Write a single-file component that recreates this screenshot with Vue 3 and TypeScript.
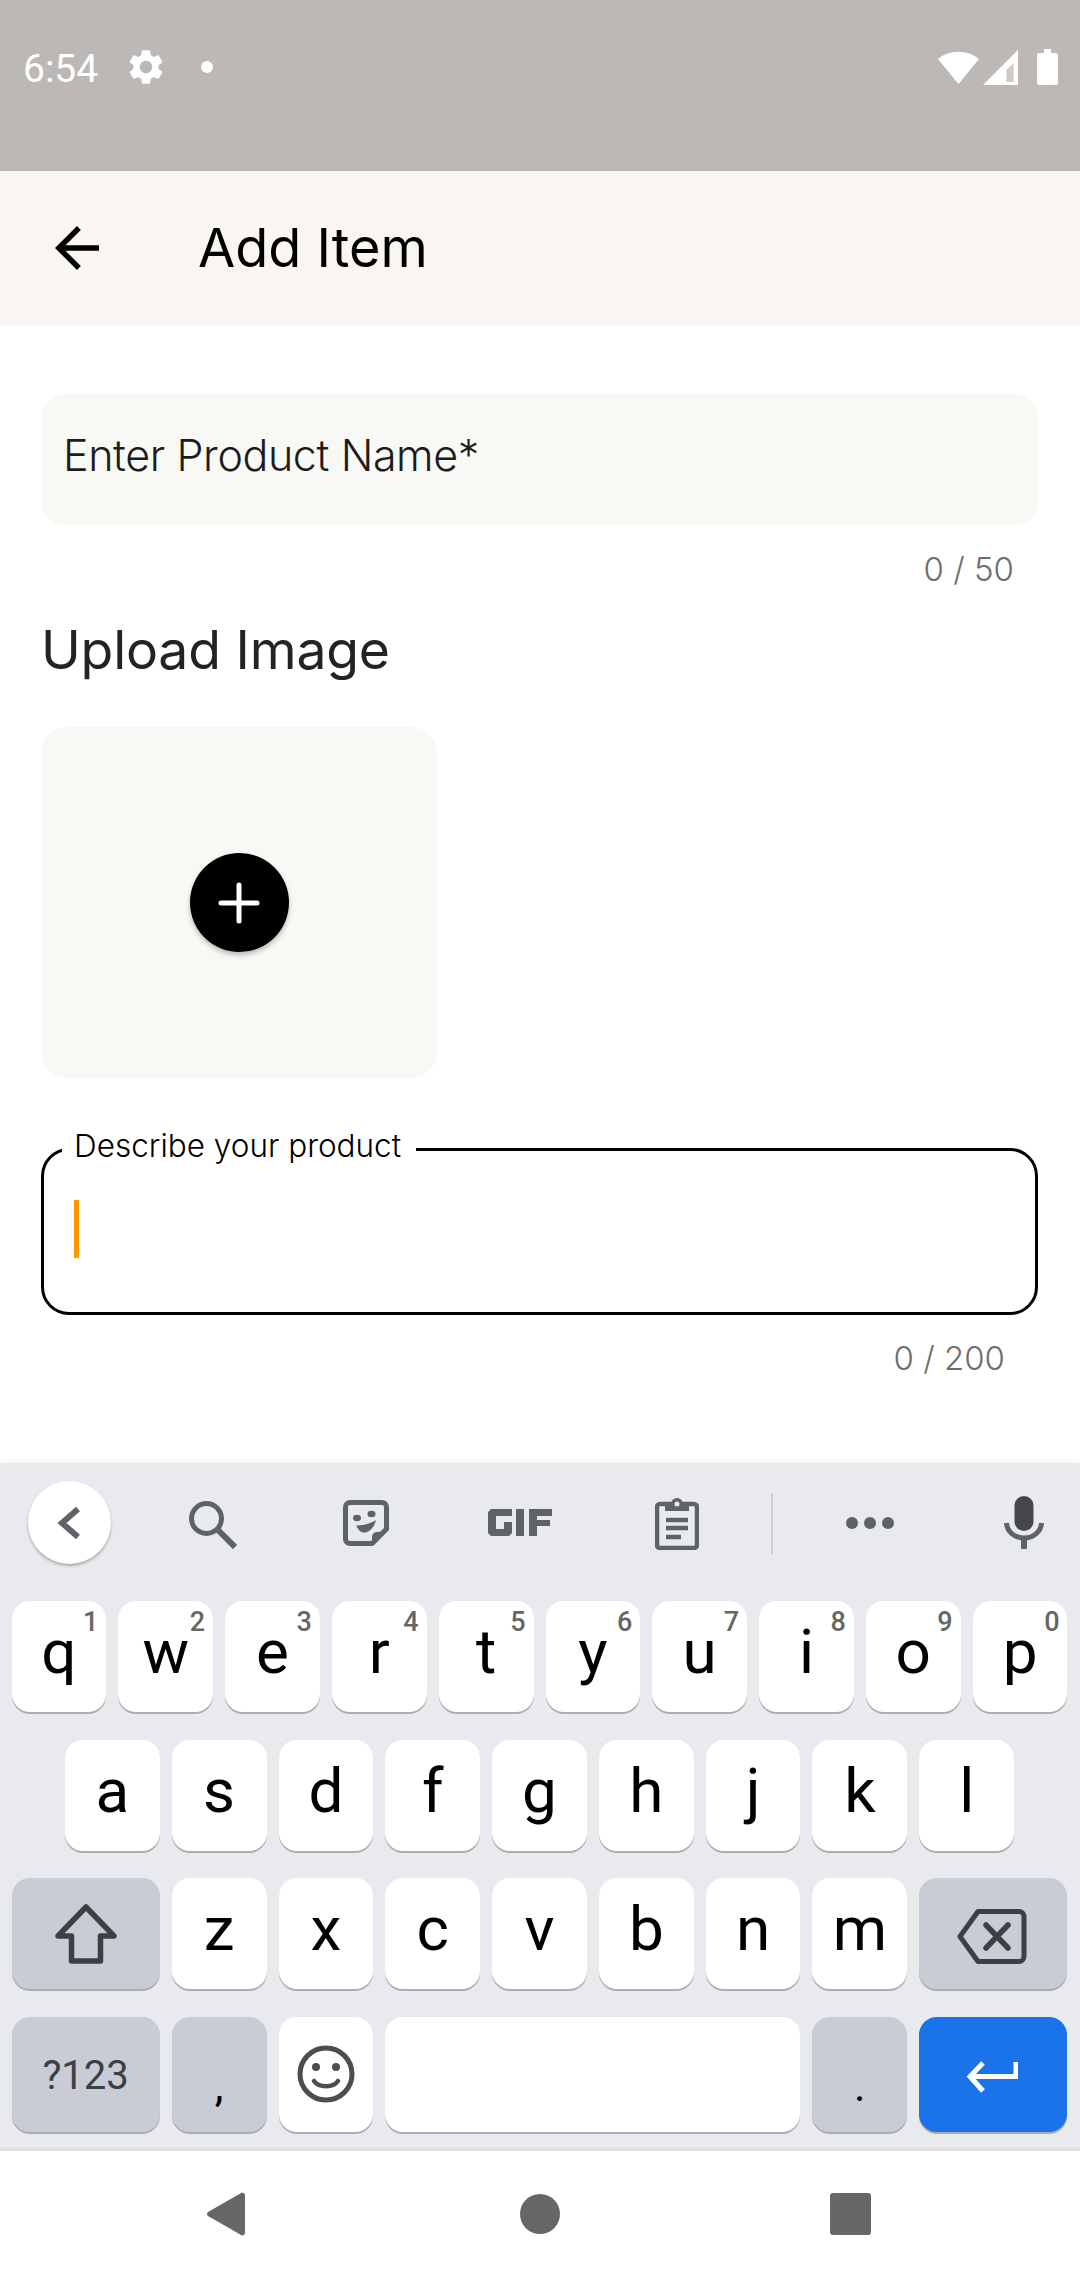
<script setup lang="ts">
interface KeyDef { label: string; hint?: string; cls?: string }
const row1: KeyDef[] = ['q','w','e','r','t','y','u','i','o','p'].map((label, i) => ({ label, hint: String((i + 1) % 10) }))
const row2: KeyDef[] = ['a','s','d','f','g','h','j','k','l'].map((label) => ({ label }))
const row3: KeyDef[] = ['z','x','c','v','b','n','m'].map((label) => ({ label }))
</script>

<template>
  <div class="screen">
    <header class="status">
      <div class="status-left">
        <span class="time">6:54</span>
        <svg class="gear" viewBox="0 0 24 24"><path fill="#fff" d="M19.14 12.94c.04-.3.06-.61.06-.94 0-.32-.02-.64-.07-.94l2.03-1.58c.18-.14.23-.41.12-.61l-1.92-3.32c-.12-.22-.37-.29-.59-.22l-2.39.96c-.5-.38-1.03-.7-1.62-.94l-.36-2.54c-.04-.24-.24-.41-.48-.41h-3.84c-.24 0-.43.17-.47.41l-.36 2.54c-.59.24-1.13.57-1.62.94l-2.39-.96c-.22-.08-.47 0-.59.22L2.74 8.87c-.12.21-.08.47.12.61l2.03 1.58c-.05.3-.09.63-.09.94s.02.64.07.94l-2.03 1.58c-.18.14-.23.41-.12.61l1.92 3.32c.12.22.37.29.59.22l2.39-.96c.5.38 1.03.7 1.62.94l.36 2.54c.05.24.24.41.48.41h3.84c.24 0 .44-.17.47-.41l.36-2.54c.59-.24 1.13-.56 1.62-.94l2.39.96c.22.08.47 0 .59-.22l1.92-3.32c.12-.22.07-.47-.12-.61l-2.01-1.58zM12 15.6c-1.98 0-3.6-1.62-3.6-3.6s1.62-3.6 3.6-3.6 3.6 1.62 3.6 3.6-1.62 3.6-3.6 3.6z"/></svg>
        <span class="dot"></span>
      </div>
      <div class="status-right">
        <svg class="wifi" width="41" height="34" viewBox="0 0 41 34"><path fill="#fff" d="M0 9A33 33 0 0 1 41 9L20.500 34Z"/></svg>
        <svg class="signal" width="35" height="35" viewBox="0 0 35 35"><path fill="#fff" fill-opacity=".25" d="M23.500 20 30.500 13V32H23.500Z"/><path fill="#fff" fill-rule="evenodd" d="M35 0V35H0ZM23.500 20V32H30.500V13Z"/></svg>
        <svg class="battery" width="21" height="36" viewBox="0 0 21 36"><path fill="#fff" d="M7 0H14V4H18.500A2.500 2.500 0 0 1 21 6.500V33.500A2.500 2.500 0 0 1 18.500 36H2.500A2.500 2.500 0 0 1 0 33.500V6.500A2.500 2.500 0 0 1 2.500 4H7Z"/></svg>
      </div>
    </header>

    <div class="appbar">
      <svg class="back" viewBox="0 0 24 24"><path fill="#000" d="M20 11H7.830l5.590-5.590L12 4l-8 8 8 8 1.410-1.410L7.830 13H20v-2z"/></svg>
      <h1 class="title">Add Item</h1>
    </div>

    <main class="form">
      <div class="name-field">Enter Product Name*</div>
      <div class="counter counter-name">0 / 50</div>
      <h2 class="upload-title">Upload Image</h2>
      <div class="upload-box">
        <button class="fab" type="button">
          <svg width="44" height="44" viewBox="0 0 44 44"><path d="M22 4V40M4 22H40" stroke="#fff" stroke-width="5" stroke-linecap="round" fill="none"/></svg>
        </button>
      </div>
      <div class="describe">
        <span class="describe-label">Describe your product</span>
        <span class="caret"></span>
      </div>
      <div class="counter counter-desc">0 / 200</div>
    </main>

    <section class="keyboard">
      <div class="toolbar">
        <span class="collapse">
          <svg width="30" height="34" viewBox="0 0 30 34"><path d="M23 3 7 17 23 31" fill="none" stroke="#5f6368" stroke-width="6"/></svg>
        </span>
        <svg class="tool tool-search" width="48" height="48" viewBox="0 0 48 48"><circle cx="17.500" cy="17.500" r="15" fill="none" stroke="#5f6368" stroke-width="5"/><path d="M28 28 46 46" stroke="#5f6368" stroke-width="6" fill="none"/></svg>
        <svg class="tool tool-sticker" width="46" height="46" viewBox="0 0 46 46">
          <path d="M7 2.500H39A4.500 4.500 0 0 1 43.500 7V29L29 43.500H7A4.500 4.500 0 0 1 2.500 39V7A4.500 4.500 0 0 1 7 2.500Z" fill="none" stroke="#5f6368" stroke-width="5"/>
          <path d="M44 31 31 45H29V37A5 5 0 0 1 34 32Z" fill="#5f6368"/>
          <ellipse cx="14" cy="18" rx="4" ry="3.200" fill="#5f6368"/><ellipse cx="28.500" cy="14" rx="4" ry="3.200" fill="#5f6368"/>
          <path d="M13 25.500C20 25.500 28 23.500 33 20C31 28 26 33 20 32.500C17 32 15 29 13 25.500Z" fill="#5f6368"/>
        </svg>
        <svg class="tool tool-gif" width="64" height="27" viewBox="0 0 64 27">
          <path d="M3 0H24V7H8V20H16V13H24V24L21 27H3L0 24V3Z" fill="#5f6368"/>
          <rect x="28" y="0" width="8" height="27" fill="#5f6368"/>
          <path d="M41 0H64V7H49V11H62V17H49V27H41Z" fill="#5f6368"/>
        </svg>
        <svg class="tool tool-clip" width="44" height="53" viewBox="0 0 44 53">
          <rect x="2" y="7" width="40" height="44" rx="3" fill="none" stroke="#5f6368" stroke-width="4.500"/>
          <path d="M10 7H16A6 6 0 0 1 28 7H34V14H10Z" fill="#5f6368"/>
          <circle cx="22" cy="7" r="2.500" fill="#e8eaed"/>
          <path d="M11 23H33M11 31H33M11 40H26" stroke="#5f6368" stroke-width="4.500" fill="none"/>
        </svg>
        <span class="tool-divider"></span>
        <svg class="tool tool-dots" width="48" height="12" viewBox="0 0 48 12"><circle cx="6" cy="6" r="6" fill="#5f6368"/><circle cx="24" cy="6" r="6" fill="#5f6368"/><circle cx="42" cy="6" r="6" fill="#5f6368"/></svg>
        <svg class="tool tool-mic" width="40" height="53" viewBox="0 0 40 53">
          <rect x="10.500" y="0" width="19" height="35" rx="9.500" fill="#46474a"/>
          <path d="M2.500 27C3 36 11 42 20 42S37 36 37.500 27" fill="none" stroke="#5f6368" stroke-width="5"/>
          <rect x="17" y="41" width="6" height="12" fill="#5f6368"/>
        </svg>
      </div>

      <div class="rows">
        <div class="row">
          <div v-for="k in row1" :key="k.label" class="key">
            <span class="hint">{{ k.hint }}</span>{{ k.label }}
          </div>
        </div>
        <div class="row">
          <div v-for="k in row2" :key="k.label" class="key">{{ k.label }}</div>
        </div>
        <div class="row">
          <div class="key fn wide">
            <svg width="62" height="60" viewBox="0 0 62 60"><path d="M31 3 59 32 H45.500 V57 H16.500 V32 H3 Z" fill="none" stroke="#3c4043" stroke-width="5.500" stroke-linejoin="round"/></svg>
          </div>
          <div v-for="k in row3" :key="k.label" class="key">{{ k.label }}</div>
          <div class="key fn wide icon-backspace">
            <svg width="70" height="55" viewBox="0 0 70 55"><path d="M21 2.500H62A5 5 0 0 1 67 7.500V47.500A5 5 0 0 1 62 52.500H21L3 27.500Z" fill="none" stroke="#3c4043" stroke-width="5" stroke-linejoin="round"/><path d="M29 16 51 39M51 16 29 39" stroke="#3c4043" stroke-width="5.500" stroke-linecap="round"/></svg>
          </div>
        </div>
        <div class="row row-bottom">
          <div class="key fn wide sym">?123</div>
          <div class="key fn punct">,</div>
          <div class="key no-pad">
            <svg width="58" height="58" viewBox="0 0 58 58"><circle cx="29" cy="29" r="26" fill="none" stroke="#4d4d4f" stroke-width="5"/><circle cx="19" cy="22" r="4" fill="#4d4d4f"/><circle cx="39" cy="22" r="4" fill="#4d4d4f"/><path d="M17 36C22 43 36 43 41 36" fill="none" stroke="#4d4d4f" stroke-width="4.500" stroke-linecap="round"/></svg>
          </div>
          <div class="key space"></div>
          <div class="key fn punct">.</div>
          <div class="key wide enter">
            <svg width="52" height="32" viewBox="0 0 52 32"><path d="M50 1V15.500H4M17 2 4 15.500 17 30" fill="none" stroke="#fff" stroke-width="5"/></svg>
          </div>
        </div>
      </div>
    </section>

    <nav class="navbar">
      <svg width="40" height="46" viewBox="0 0 40 46"><path d="M36 1.500A3 3 0 0 1 39 4V42A3 3 0 0 1 36 44.500L2 25A2.500 2.500 0 0 1 2 21Z" fill="#676767"/></svg>
      <span class="home"></span>
      <span class="recent"></span>
    </nav>
  </div>
</template>

<style>
html, body { margin: 0; padding: 0; background: #fff; }
</style>

<style scoped>
.screen {
  width: 1080px;
  height: 2280px;
  display: flex;
  flex-direction: column;
  background: #fff;
  overflow: hidden;
  font-family: "Inter", "Liberation Sans", sans-serif;
}
.status {
  height: 171px;
  flex: none;
  box-sizing: border-box;
  background: #bcb8b5;
  display: flex;
  justify-content: space-between;
  align-items: flex-start;
  padding: 49px 22px 0 23px;
}
.status-left { display: flex; align-items: center; height: 36px; }
.time {
  font-family: Roboto, sans-serif;
  font-size: 39px;
  color: #fff;
  line-height: 36px;
  width: 74px;
  margin-top: 3px;
}
.gear { width: 42px; height: 42px; margin-left: 28px; flex: none; }
.dot { width: 12px; height: 12px; border-radius: 50%; background: #fff; margin-left: 34px; }
.status-right { display: flex; align-items: flex-start; }
.wifi { margin-top: 1px; }
.signal { margin-left: 4px; margin-top: 1px; }
.battery { margin-left: 19px; }

.appbar {
  height: 154px;
  flex: none;
  background: #f9f6f1;
  display: flex;
  align-items: center;
  padding-left: 44px;
}
.back { width: 66px; height: 66px; flex: none; }
.title {
  margin: 0 0 0 88px;
  font-size: 54px;
  font-weight: 400;
  color: #000;
  line-height: 1;
}

.form {
  flex: 1;
  min-height: 0;
  display: flex;
  flex-direction: column;
  padding: 69px 42px 0 41px;
}
.form > * { flex: none; }
.name-field {
  height: 131px;
  box-sizing: border-box;
  background: #f8f9f4;
  border-radius: 24px;
  padding: 34px 22px 0;
  font-size: 43px;
  font-weight: 350;
  letter-spacing: -.4px;
  line-height: 54px;
  color: #1c1c1c;
}
.counter { font-size: 33px; font-weight: 300; line-height: 40px; color: #6e6e6e; text-align: right; }
.counter-name { margin-top: 24px; padding-right: 24px; }
.upload-title {
  margin: 30px 0 0;
  font-size: 53.5px;
  font-weight: 400;
  letter-spacing: -.2px;
  line-height: 62px;
  color: #232323;
}
.upload-box {
  width: 396px;
  height: 351px;
  margin-top: 46px;
  background: #f8f9f4;
  border-radius: 26px;
  display: flex;
  align-items: center;
  justify-content: center;
}
.fab {
  width: 99px;
  height: 99px;
  padding: 0;
  border: none;
  border-radius: 50%;
  background: #000;
  box-shadow: 0 3px 5px rgba(0, 0, 0, .25);
  display: flex;
  align-items: center;
  justify-content: center;
}
.describe {
  position: relative;
  height: 167px;
  box-sizing: border-box;
  margin-top: 70px;
  border: 3px solid #000;
  border-radius: 28px;
  padding: 49px 0 0 30px;
}
.describe-label {
  position: absolute;
  left: 18px;
  top: -27px;
  padding: 0 15px 0 12px;
  background: #fff;
  font-size: 31.5px;
  font-weight: 350;
  line-height: 44px;
  color: #000;
}
.caret { display: block; width: 5px; height: 58px; background: #ff9800; }
.counter-desc { margin-top: 23px; padding-right: 33px; }

.keyboard {
  height: 688px;
  flex: none;
  box-sizing: border-box;
  background: #e8eaed;
  border-bottom: 3px solid #dfe0e2;
  box-shadow: 0 -2px 4px rgba(0, 0, 0, .04);
}
.toolbar {
  height: 138px;
  position: relative;
}
.collapse {
  position: absolute;
  left: 28px;
  top: 18px;
  width: 83px;
  height: 83px;
  border-radius: 50%;
  background: #fff;
  box-shadow: 0 2px 3px rgba(0, 0, 0, .28);
  display: flex;
  align-items: center;
  justify-content: center;
}
.tool { position: absolute; }
.tool-search { left: 189px; top: 38px; }
.tool-sticker { left: 343px; top: 37px; }
.tool-gif { left: 488px; top: 46px; }
.tool-clip { left: 655px; top: 34px; }
.tool-divider { position: absolute; left: 771px; top: 30px; width: 2px; height: 61px; background: #ccced3; }
.tool-dots { left: 846px; top: 54px; }
.tool-mic { left: 1004px; top: 33px; }

.rows { display: flex; flex-direction: column; gap: 27.5px; padding-right: 1px; }
.row { display: flex; gap: 12px; height: 111px; justify-content: center; }
.row-bottom { height: 115px; }
.key {
  position: relative;
  width: 94.8px;
  flex: none;
  box-sizing: border-box;
  background: #fff;
  border-radius: 18px;
  box-shadow: 0 2px 0 #abadb1;
  display: flex;
  align-items: center;
  justify-content: center;
  padding-bottom: 10px;
  font-family: Roboto, sans-serif;
  font-size: 62px;
  color: #000;
}
.hint {
  position: absolute;
  top: 5px;
  right: 8px;
  font-size: 27px;
  line-height: 32px;
  font-weight: 500;
  color: #666;
}
.no-pad { padding-bottom: 0; }
.fn { background: #c9ccd4; padding-bottom: 0; }
.wide { width: 148.2px; }
.icon-backspace svg { margin: 5px 2px 0 0; }
.sym { font-size: 40px; color: #3c4043; padding: 3px 0 0; }
.punct { align-items: flex-end; padding-bottom: 20px; font-size: 44px; }
.space { width: 415.2px; }
.enter { background: #1a73e8; padding-bottom: 0; }
.enter svg { margin: 6px 3px 0 0; }

.navbar {
  height: 129px;
  flex: none;
  background: #fff;
  display: flex;
  align-items: center;
}
.navbar svg { margin-left: 206px; margin-top: -3px; }
.home { width: 40px; height: 40px; border-radius: 50%; background: #676767; margin: -3px 0 0 274px; }
.recent { width: 41px; height: 42px; border-radius: 3px; background: #676767; margin: -3px 0 0 270px; }
</style>
